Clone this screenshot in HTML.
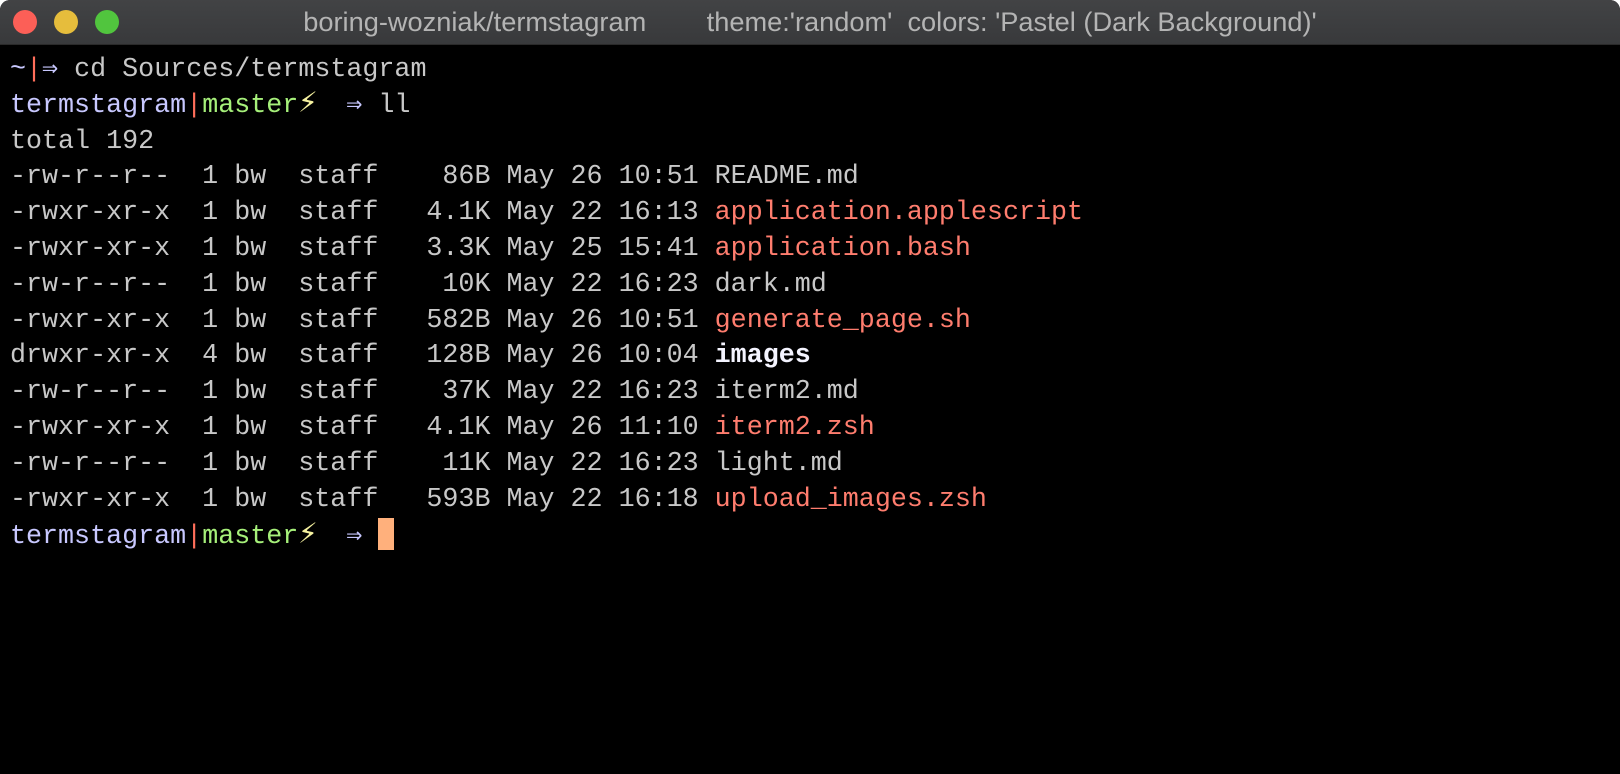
<!DOCTYPE html>
<html><head><meta charset="utf-8"><style>
html,body{margin:0;padding:0;background:#fff;width:1620px;height:774px;overflow:hidden}
.win{position:absolute;left:0;top:0;width:1620px;height:774px;background:#000;border-radius:10px 10px 0 0;overflow:hidden}
.bar{position:absolute;left:0;top:0;width:1620px;height:44px;background:linear-gradient(#424345,#38393b);border-bottom:1px solid #2a2a2a}
.dot{position:absolute;top:10px;width:24px;height:24px;border-radius:50%}
.title{position:absolute;left:0;right:0;top:6px;text-align:center;font:27.2px "Liberation Sans",sans-serif;color:#b4b4b4;white-space:pre}
.term{position:absolute;left:10px;top:53px;font:26.7px/35.8px "Liberation Mono",monospace;color:#c8c8c8;white-space:pre}
.u{color:#c8c8ff}.p{color:#ff6e5a}.g{color:#a6f07a}.y{color:#f6f2a0;display:inline-block;width:32px;text-align:left;font-size:32px;line-height:20px}.x{color:#ff7d6e}.b{color:#f4f4ff;font-weight:bold}
.cur{display:inline-block;width:16px;height:32px;background:#ffb07c;vertical-align:-7px}
</style></head><body><div class="win">
<div class="bar"><div class="dot" style="left:13px;background:#fc5f57"></div><div class="dot" style="left:54px;background:#e6bd3c"></div><div class="dot" style="left:95px;background:#51c53e"></div>
<div class="title">boring-wozniak/termstagram        theme:'random'  colors: 'Pastel (Dark Background)'</div></div>
<div class="term"><span class="u">~</span><span class="p">|</span><span class="u">⇒</span> cd Sources/termstagram
<span class="u">termstagram</span><span class="p">|</span><span class="g">master</span><span class="y">⚡</span> <span class="u">⇒</span> ll
total 192
-rw-r--r--  1 bw  staff    86B May 26 10:51 README.md
-rwxr-xr-x  1 bw  staff   4.1K May 22 16:13 <span class="x">application.applescript</span>
-rwxr-xr-x  1 bw  staff   3.3K May 25 15:41 <span class="x">application.bash</span>
-rw-r--r--  1 bw  staff    10K May 22 16:23 dark.md
-rwxr-xr-x  1 bw  staff   582B May 26 10:51 <span class="x">generate_page.sh</span>
drwxr-xr-x  4 bw  staff   128B May 26 10:04 <span class="b">images</span>
-rw-r--r--  1 bw  staff    37K May 22 16:23 iterm2.md
-rwxr-xr-x  1 bw  staff   4.1K May 26 11:10 <span class="x">iterm2.zsh</span>
-rw-r--r--  1 bw  staff    11K May 22 16:23 light.md
-rwxr-xr-x  1 bw  staff   593B May 22 16:18 <span class="x">upload_images.zsh</span>
<span class="u">termstagram</span><span class="p">|</span><span class="g">master</span><span class="y">⚡</span> <span class="u">⇒</span> <span class="cur"></span></div>
</div></body></html>
